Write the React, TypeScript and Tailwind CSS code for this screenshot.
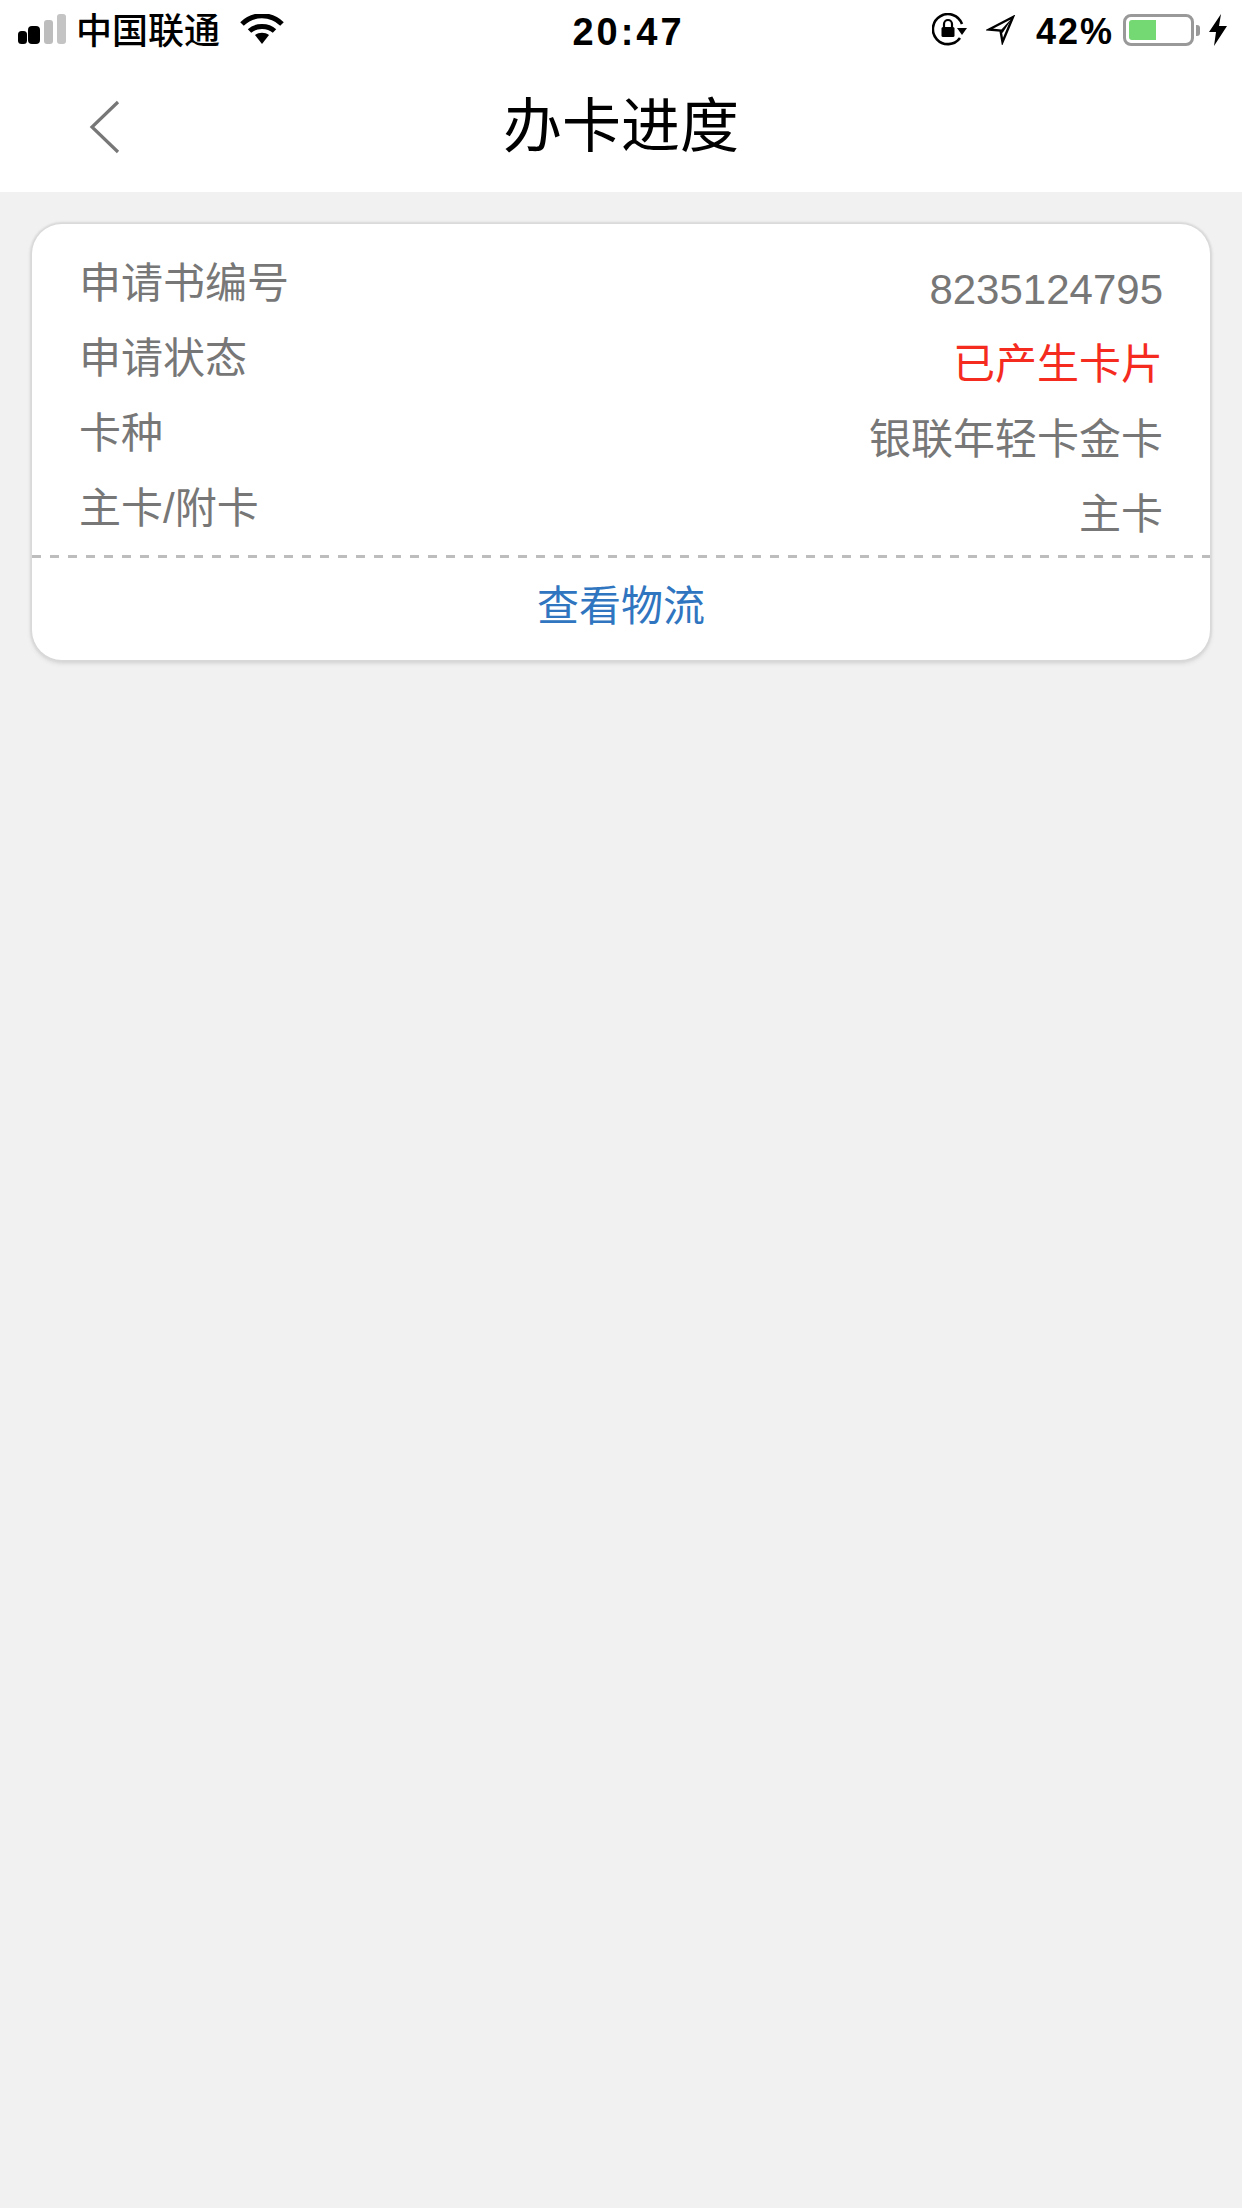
import React from 'react';

const font = { fontFamily: '"Liberation Sans", "Noto Sans CJK SC", sans-serif' };

const rows = [
  { label: '申请书编号', value: '8235124795', red: false },
  { label: '申请状态', value: '已产生卡片', red: true },
  { label: '卡种', value: '银联年轻卡金卡', red: false },
  { label: '主卡/附卡', value: '主卡', red: false },
];

const SignalIcon = () => (
  <svg width="50" height="32" viewBox="0 0 50 32">
    <rect x="0" y="17" width="9" height="13" rx="3.5" fill="#000" />
    <rect x="10" y="12" width="12" height="18" rx="4" fill="#000" />
    <rect x="26" y="6" width="9" height="24" rx="3" fill="#bdbdbd" />
    <rect x="39" y="0" width="9" height="30" rx="3" fill="#c4c4c4" />
  </svg>
);

const WifiIcon = () => (
  <svg width="44" height="32" viewBox="0 0 44 32">
    <path d="M2 10 C13 -1 31 -1 42 10" fill="none" stroke="#000" strokeWidth="5" />
    <path d="M9.5 17 C16 11 28 11 34.5 17" fill="none" stroke="#000" strokeWidth="5" />
    <path d="M15 21 C19 18 25 18 29 21 L22 30 Z" fill="#000" />
  </svg>
);

const RotationLockIcon = () => (
  <svg width="36" height="34" viewBox="0 0 36 34">
    <path d="M28 25 A15 15 0 1 1 30 11" fill="none" stroke="#000" strokeWidth="2.6" />
    <path d="M25 15 L35 15 L30 22 Z" fill="#000" />
    <rect x="9.5" y="14" width="13" height="10" rx="1.5" fill="#000" />
    <path d="M12 14 V11 A4 4 0 0 1 20 11 V14" fill="none" stroke="#000" strokeWidth="2.2" />
  </svg>
);

const LocationIcon = () => (
  <svg width="30" height="30" viewBox="0 0 30 30">
    <path d="M27 2 L3 14.5 L14.5 15.5 L16.5 27 Z" fill="none" stroke="#000" strokeWidth="2.4" strokeLinejoin="miter" />
    <path d="M27 2 L14.5 15.5 L16.5 18 Z" fill="#000" />
  </svg>
);

const BoltIcon = () => (
  <svg width="18" height="32" viewBox="0 0 18 32">
    <path d="M12 0 L0 18 L7 18 L5 32 L18 12 L10 12 Z" fill="#000" />
  </svg>
);

const BatteryIcon = () => (
  <div className="flex items-center">
    <div className="w-[71px] h-[32px] rounded-[8px] border-[3px] border-[#999] p-[3px] flex">
      <div className="w-[27px] h-full rounded-l-[3px] bg-[#74d873]" />
    </div>
    <div className="w-[4px] h-[11px] ml-[2px] rounded-r-[3px] bg-[#999]" />
  </div>
);

const StatusBar = () => (
  <div className="h-[60px] flex items-center pl-[18px] pr-[15px] text-black">
    <div className="flex-1 flex items-center">
      <SignalIcon />
      <span className="ml-[8px] pt-[3px] text-[36px] leading-[60px] font-medium">中国联通</span>
      <span className="ml-[20px] flex">
        <WifiIcon />
      </span>
    </div>
    <span className="pl-[12px] pt-[3px] text-[38px] leading-[60px] font-bold tracking-[3px]">20:47</span>
    <div className="flex-1 flex items-center justify-end">
      <RotationLockIcon />
      <span className="ml-[18px] flex">
        <LocationIcon />
      </span>
      <span className="ml-[20px] pt-[3px] text-[36px] leading-[60px] font-bold tracking-[2px]">42%</span>
      <span className="ml-[9px] flex">
        <BatteryIcon />
      </span>
      <span className="ml-[9px] flex">
        <BoltIcon />
      </span>
    </div>
  </div>
);

const NavBar = () => (
  <div className="relative h-[132px] flex items-center justify-center">
    <svg className="absolute left-[88px] top-[39px]" width="34" height="56" viewBox="0 0 34 56">
      <path d="M30 3 L4 28 L30 53" fill="none" stroke="#777" strokeWidth="3.2" />
    </svg>
    <h1 className="pt-[2px] text-[59px] leading-[72px] font-normal text-black">办卡进度</h1>
  </div>
);

export default function App() {
  return (
    <div className="min-h-[2208px] bg-[#f1f1f1]" style={font}>
      <div className="bg-white">
        <StatusBar />
        <NavBar />
      </div>
      <div className="px-[32px] pt-[32px]">
        <div className="bg-white rounded-[30px] shadow-[0_0_2px_2px_#d8d8d8,0_3px_5px_#d0d0d0]">
          <div className="pl-[47px] pr-[47px] pt-[30px] h-[331px]">
            {rows.map(row => (
              <div key={row.label} className="flex justify-between h-[75px] text-[42px] leading-[60px] text-[#777]">
                <span>{row.label}</span>
                <span className={row.red ? 'mt-[6px] text-[#f52b1f]' : 'mt-[6px]'}>{row.value}</span>
              </div>
            ))}
          </div>
          <div className="h-[3px] bg-[repeating-linear-gradient(90deg,#bdbdbd_0_9px,transparent_9px_18px)]" />
          <div className="h-[102px] pb-[6px] flex items-center justify-center text-[42px] text-[#2f75c0]">查看物流</div>
        </div>
      </div>
    </div>
  );
}
